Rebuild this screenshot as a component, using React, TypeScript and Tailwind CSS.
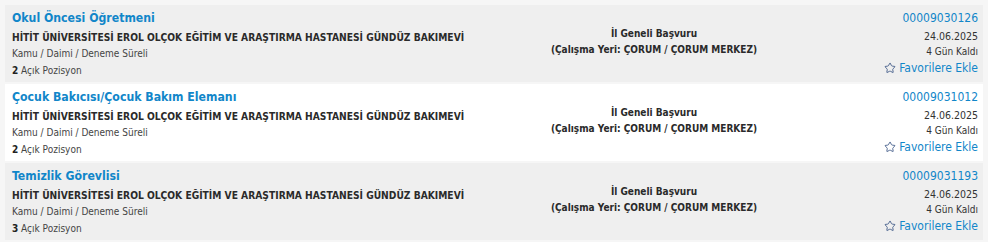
import { Star } from "lucide-react";

type Ilan = {
  baslik: string;
  kurum: string;
  tur: string;
  pozisyon: number;
  no: string;
  tarih: string;
  kalan: string;
};

const ILANLAR: Ilan[] = [
  {
    baslik: "Okul Öncesi Öğretmeni",
    kurum: "HİTİT ÜNİVERSİTESİ EROL OLÇOK EĞİTİM VE ARAŞTIRMA HASTANESİ GÜNDÜZ BAKIMEVİ",
    tur: "Kamu / Daimi / Deneme Süreli",
    pozisyon: 2,
    no: "00009030126",
    tarih: "24.06.2025",
    kalan: "4 Gün Kaldı",
  },
  {
    baslik: "Çocuk Bakıcısı/Çocuk Bakım Elemanı",
    kurum: "HİTİT ÜNİVERSİTESİ EROL OLÇOK EĞİTİM VE ARAŞTIRMA HASTANESİ GÜNDÜZ BAKIMEVİ",
    tur: "Kamu / Daimi / Deneme Süreli",
    pozisyon: 2,
    no: "00009031012",
    tarih: "24.06.2025",
    kalan: "4 Gün Kaldı",
  },
  {
    baslik: "Temizlik Görevlisi",
    kurum: "HİTİT ÜNİVERSİTESİ EROL OLÇOK EĞİTİM VE ARAŞTIRMA HASTANESİ GÜNDÜZ BAKIMEVİ",
    tur: "Kamu / Daimi / Deneme Süreli",
    pozisyon: 3,
    no: "00009031193",
    tarih: "24.06.2025",
    kalan: "4 Gün Kaldı",
  },
];

function IlanRow({ ilan, gri }: { ilan: Ilan; gri: boolean }) {
  return (
    <div className={`flex h-[77px] pl-[7px] pr-[5px] ${gri ? "bg-[#efefef]" : "bg-white"}`}>
      {/* Sol */}
      <div className="w-[458px] shrink-0 pt-[4px] whitespace-nowrap">
        <div className="text-[12.2px] font-bold leading-[18px] text-[#1186c9]">{ilan.baslik}</div>
        <div className="mt-[3px] text-[10.2px] font-bold leading-[16px] text-[#2a2a2a]">{ilan.kurum}</div>
        <div className="text-[10px] leading-[16px] text-[#444]">{ilan.tur}</div>
        <div className="text-[10px] leading-[17px] text-[#444]">
          <span className="font-bold text-[#222]">{ilan.pozisyon}</span> Açık Pozisyon
        </div>
      </div>

      {/* Orta */}
      <div className="flex flex-1 flex-col items-center justify-center pb-[3px] text-[10px] font-bold leading-[16px] text-[#2a2a2a]">
        <div>İl Geneli Başvuru</div>
        <div>(Çalışma Yeri: ÇORUM / ÇORUM MERKEZ)</div>
      </div>

      {/* Sağ */}
      <div className="w-[140px] shrink-0 pt-[4px] text-right whitespace-nowrap">
        <div className="text-[12px] leading-[18px] text-[#1186c9]">{ilan.no}</div>
        <div className="mt-[1px] text-[10.5px] leading-[16px] text-[#333]">{ilan.tarih}</div>
        <div className="text-[10px] leading-[16px] text-[#333]">{ilan.kalan}</div>
        <div className="flex items-center justify-end gap-[3px] text-[12px] leading-[16px] text-[#1186c9]">
          <Star size={12} strokeWidth={1.6} className="text-[#2d4a7c]" />
          <span>Favorilere Ekle</span>
        </div>
      </div>
    </div>
  );
}

export default function App() {
  return (
    <div
      className="h-[242px] w-[988px] bg-[#f6f6f6] px-[5px] pt-[5px]"
      style={{ fontFamily: '"DejaVu Sans Condensed", "DejaVu Sans", sans-serif' }}
    >
      <div className="flex flex-col gap-[2px]">
        {ILANLAR.map((ilan, i) => (
          <IlanRow key={ilan.no} ilan={ilan} gri={i !== 1} />
        ))}
      </div>
    </div>
  );
}
